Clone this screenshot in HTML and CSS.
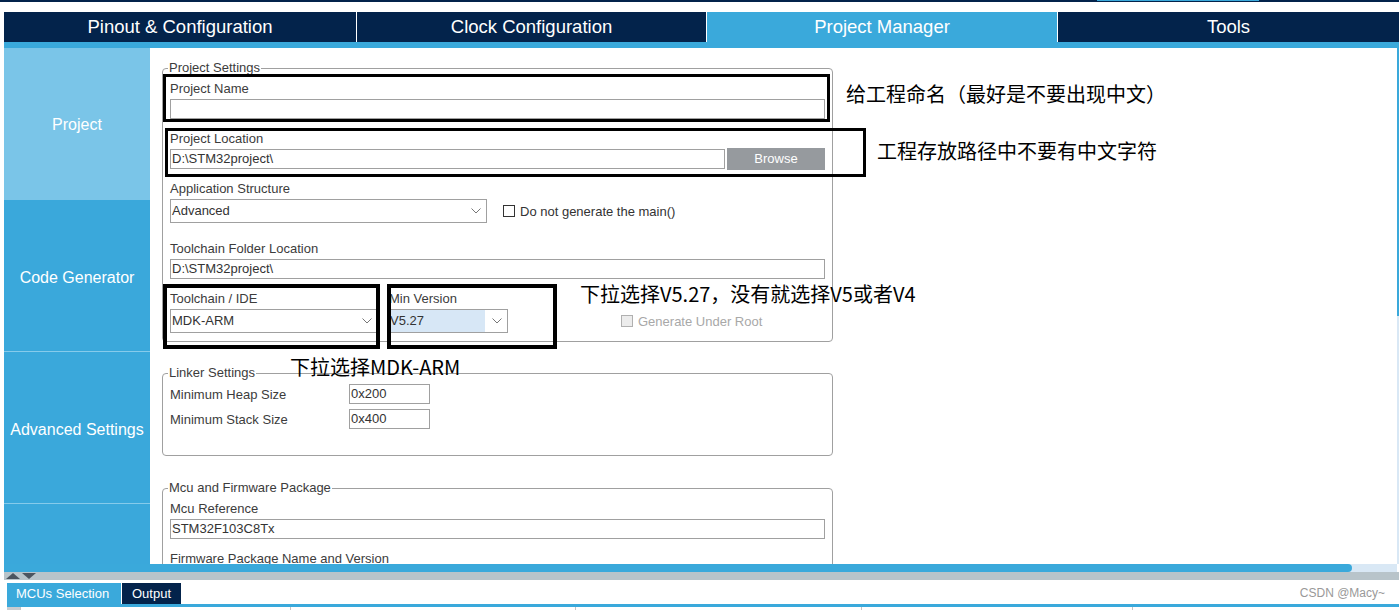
FILE: index.html
```html
<!DOCTYPE html>
<html lang="zh-CN">
<head>
    <meta charset="UTF-8">
    <meta name="viewport" content="width=device-width, initial-scale=1.0">
    <title>Project Manager</title>
    <link rel="stylesheet" href="styles.css">
</head>
<body>
    <div class="topline"><span class="topline-mark"></span></div>

    <nav class="tabs">
        <div class="tab tab-pinout">Pinout &amp; Configuration</div>
        <div class="tab tab-clock">Clock Configuration</div>
        <div class="tab tab-project active">Project Manager</div>
        <div class="tab tab-tools">Tools</div>
    </nav>
    <div class="tab-strip"></div>

    <div class="workspace">
        <aside class="sidebar">
            <div class="side-item active">Project</div>
            <div class="side-item">Code Generator</div>
            <div class="side-item">Advanced Settings</div>
            <div class="side-item"></div>
        </aside>

        <main class="content">
            <!-- Project Settings -->
            <fieldset class="group settings">
                <legend>Project Settings</legend>

                <div class="field">
                    <div class="field-label">Project Name</div>
                    <div class="input"></div>
                </div>

                <div class="field">
                    <div class="field-label">Project Location</div>
                    <div class="row">
                        <div class="input grow">D:\STM32project\</div>
                        <div class="browse">Browse</div>
                    </div>
                </div>

                <div class="field field-wide">
                    <div class="field-label">Application Structure</div>
                    <div class="row">
                        <div class="select select-app">
                            <span class="select-value">Advanced</span>
                            <svg class="chevron" width="10" height="6" viewBox="0 0 10 6"><polyline points="0.5,0.5 5,5 9.5,0.5" fill="none" stroke="#777" stroke-width="1"/></svg>
                        </div>
                        <label class="check">
                            <span class="box"></span>
                            Do not generate the main()
                        </label>
                    </div>
                </div>

                <div class="field">
                    <div class="field-label">Toolchain Folder Location</div>
                    <div class="input">D:\STM32project\</div>
                </div>

                <div class="field last">
                    <div class="row">
                        <div class="col col-ide">
                            <div class="field-label">Toolchain / IDE</div>
                            <div class="select">
                                <span class="select-value">MDK-ARM</span>
                                <svg class="chevron" width="10" height="6" viewBox="0 0 10 6"><polyline points="0.5,0.5 5,5 9.5,0.5" fill="none" stroke="#777" stroke-width="1"/></svg>
                            </div>
                        </div>
                        <div class="col col-version">
                            <div class="field-label">Min Version</div>
                            <div class="select select-version">
                                <span class="select-value picked">V5.27</span>
                                <svg class="chevron" width="10" height="6" viewBox="0 0 10 6"><polyline points="0.5,0.5 5,5 9.5,0.5" fill="none" stroke="#777" stroke-width="1"/></svg>
                            </div>
                        </div>
                        <label class="check disabled">
                            <span class="box"></span>
                            Generate Under Root
                        </label>
                    </div>
                </div>
            </fieldset>

            <!-- Linker Settings -->
            <fieldset class="group linker">
                <legend>Linker Settings</legend>
                <div class="pair">
                    <span class="pair-label">Minimum Heap Size</span>
                    <div class="input small">0x200</div>
                </div>
                <div class="pair">
                    <span class="pair-label">Minimum Stack Size</span>
                    <div class="input small">0x400</div>
                </div>
            </fieldset>

            <!-- Mcu and Firmware Package -->
            <fieldset class="group mcu">
                <legend>Mcu and Firmware Package</legend>
                <div class="field">
                    <div class="field-label">Mcu Reference</div>
                    <div class="input">STM32F103C8Tx</div>
                </div>
                <div class="field">
                    <div class="field-label">Firmware Package Name and Version</div>
                    <div class="input"></div>
                </div>
            </fieldset>

            <!-- annotations drawn over the screenshot -->
            <div class="mark mark-name"></div>
            <div class="mark mark-location"></div>
            <div class="mark mark-ide"></div>
            <div class="mark mark-version"></div>

            <div class="note note-name">给工程命名（最好是不要出现中文）</div>
            <div class="note note-location">工程存放路径中不要有中文字符</div>
            <div class="note note-version">下拉选择V5.27，没有就选择V5或者V4</div>
            <div class="note note-ide">下拉选择MDK-ARM</div>
        </main>

        <div class="vscroll"><div class="vthumb"></div></div>
    </div>

    <div class="hscroll"><div class="hthumb"></div></div>
    <div class="splitter">
        <span class="arrow-up"></span>
        <span class="arrow-down"></span>
    </div>

    <div class="bottom">
        <div class="bottom-tabs">
            <div class="btab active">MCUs Selection</div>
            <div class="btab">Output</div>
            <span class="watermark">CSDN @Macy~</span>
        </div>
        <div class="bottom-line"></div>
        <div class="bottom-cells">
            <div class="cell cell-first"></div>
            <div class="cell" style="width: 270px"></div>
            <div class="cell" style="width: 285px"></div>
            <div class="cell" style="width: 286px"></div>
            <div class="cell" style="width: 271px"></div>
            <div class="cell grow"></div>
        </div>
    </div>
</body>
</html>
```

FILE: styles.css
```css
/* Pagina base */
body {
    margin: 0;
    font-family: "Liberation Sans", Arial, sans-serif;
    background-color: #fff;
    overflow: hidden;
}

/* Linea superior */
.topline {
    height: 2px;
    background-color: #03234b;
    margin-bottom: 10px;
}

.topline-mark {
    display: block;
    width: 162px;
    height: 1px;
    margin-left: 1097px;
    background-color: #3aa9db;
}

/* Pestanas principales */
.tabs {
    display: flex;
    height: 30px;
    margin-left: 4px;
}

.tab {
    background-color: #03234b;
    color: #fff;
    font-size: 18.5px;
    line-height: 30px;
    text-align: center;
    box-sizing: border-box;
}

.tab-pinout { width: 352px; }
.tab-clock { width: 350px; border-left: 1px solid #fff; }
.tab-project { width: 351px; border-left: 1px solid #fff; }
.tab-tools { flex: 1; border-left: 1px solid #fff; }

.tab.active {
    background-color: #3aa9db;
}

.tab-strip {
    height: 6px;
    margin-left: 4px;
    background-color: #3aa9db;
}

/* Zona de trabajo */
.workspace {
    display: flex;
    height: 516px;
    margin-left: 4px;
}

.sidebar {
    width: 146px;
    background-color: #3aa8db;
    flex-shrink: 0;
}

.side-item {
    height: 152px;
    box-sizing: border-box;
    border-bottom: 1px solid #86cbeb;
    padding-top: 4px;
    color: #fff;
    font-size: 16px;
    display: flex;
    align-items: center;
    justify-content: center;
}

.side-item.active {
    background-color: #7ac5e8;
    border-bottom-color: #7ac5e8;
    padding-top: 2px;
}

.content {
    flex: 1;
    position: relative;
    overflow: hidden;
    background-color: #fff;
    padding: 13px 0 0 12px;
    color: #3c3c3c;
    font-size: 13px;
}

.vscroll {
    width: 2px;
    background-color: #d9e8f5;
}

.vthumb {
    height: 268px;
    background-color: #3aa9db;
}

/* Grupos */
.group {
    width: 671px;
    box-sizing: border-box;
    margin: 0;
    padding: 6px 7px 8px 7px;
    border: 1px solid #a0a0a0;
    border-radius: 4px;
}

.group legend {
    font-size: 13px;
    line-height: 14px;
    padding: 0 1px;
    margin-left: -2px;
    color: #3c3c3c;
}

.linker {
    margin-top: 24px;
    padding: 4px 7px 26px 7px;
}

.mcu {
    margin-top: 25px;
}

.field {
    margin-bottom: 12px;
}

.field-wide {
    margin-bottom: 18px;
}

.field.last {
    margin-bottom: 0;
}

.field-label {
    line-height: 16px;
    margin-bottom: 2px;
}

.row {
    display: flex;
    align-items: center;
}

.grow {
    flex: 1;
}

.input {
    height: 20px;
    box-sizing: border-box;
    border: 1px solid #a0a0a0;
    padding: 0 1px;
    line-height: 18px;
    color: #333;
    background-color: #fff;
}

.input.small {
    width: 81px;
}

.browse {
    width: 98px;
    height: 22px;
    margin: -1px 0 -1px 2px;
    background-color: #969a9e;
    color: #fff;
    line-height: 22px;
    text-align: center;
}

/* Desplegables */
.select {
    height: 24px;
    box-sizing: border-box;
    border: 1px solid #a0a0a0;
    display: flex;
    align-items: center;
    color: #333;
}

.select-app {
    width: 317px;
}

.select-value {
    flex: 1;
    padding-left: 1px;
    line-height: 22px;
}

.select-value.picked {
    background-color: #d7e7f6;
    margin-right: 7px;
}

.chevron {
    margin-right: 5px;
}

.col-ide {
    width: 208px;
}

.col-version {
    margin-left: 10px;
}

.col-version .field-label {
    padding-left: 1px;
}

.select-version {
    width: 120px;
}

/* Casillas */
.check {
    display: flex;
    align-items: center;
    margin-left: 16px;
    color: #333;
}

.check .box {
    width: 10px;
    height: 10px;
    border: 1px solid #333;
    margin-right: 5px;
    background-color: #fff;
}

.check.disabled {
    align-self: flex-end;
    height: 24px;
    margin-left: 113px;
    color: #a8a8a8;
}

.check.disabled .box {
    border-color: #b0b0b0;
    background-color: #ececec;
}

/* Ajustes del enlazador */
.pair {
    display: flex;
    align-items: center;
    margin-bottom: 5px;
}

.pair:last-child {
    margin-bottom: 0;
}

.pair-label {
    width: 179px;
}

/* Recuadros y notas sobre la captura */
.mark {
    position: absolute;
    box-sizing: border-box;
    border: 3px solid #000;
}

.mark-name { left: 13px; top: 26px; width: 667px; height: 48px; }
.mark-location { left: 15px; top: 80px; width: 701px; height: 49px; }
.mark-ide { left: 13px; top: 236px; width: 217px; height: 65px; border-width: 4px; }
.mark-version { left: 237px; top: 236px; width: 170px; height: 65px; border-width: 4px; }

.note {
    position: absolute;
    font-family: "Noto Sans CJK SC", sans-serif;
    font-size: 20px;
    line-height: 24px;
    color: #000;
    white-space: nowrap;
}

.note-name { left: 696px; top: 34px; }
.note-location { left: 727px; top: 91px; }
.note-version { left: 430px; top: 234px; }
.note-ide { left: 140px; top: 307px; }

/* Barras inferiores */
.hscroll {
    height: 8px;
    margin-left: 4px;
    margin-right: 2px;
    background-color: #d9e8f5;
}

.hthumb {
    width: 1348px;
    height: 8px;
    background-color: #3aa9db;
    border-radius: 0 4px 4px 0;
}

.splitter {
    height: 8px;
    margin-left: 4px;
    background-color: #b8c4ca;
    display: flex;
    align-items: center;
    padding-left: 2px;
}

.arrow-up {
    width: 0;
    height: 0;
    border-left: 7px solid transparent;
    border-right: 7px solid transparent;
    border-bottom: 6px solid #4b5560;
}

.arrow-down {
    width: 0;
    height: 0;
    margin-left: 2px;
    border-left: 7px solid transparent;
    border-right: 7px solid transparent;
    border-top: 6px solid #4b5560;
}

.bottom {
    margin-top: 3px;
    margin-left: 7px;
}

.bottom-tabs {
    display: flex;
    height: 21px;
}

.btab {
    padding: 0 10px;
    line-height: 21px;
    font-size: 13px;
    color: #fff;
    background-color: #03234b;
    margin-left: 1px;
}

.btab.active {
    width: 114px;
    box-sizing: border-box;
    padding: 0 9px;
    background-color: #3aa9db;
    margin-left: 0;
}

.watermark {
    margin-left: auto;
    margin-right: 14px;
    font-size: 12px;
    line-height: 21px;
    color: #999;
}

.bottom-line {
    height: 3px;
    background-color: #3aa9db;
}

.bottom-cells {
    display: flex;
    height: 3px;
}

.cell {
    box-sizing: border-box;
    border-left: 1px solid #c4c4c4;
}

.cell-first {
    width: 13px;
    border-left: none;
    background-color: #c8ccd0;
}
```
